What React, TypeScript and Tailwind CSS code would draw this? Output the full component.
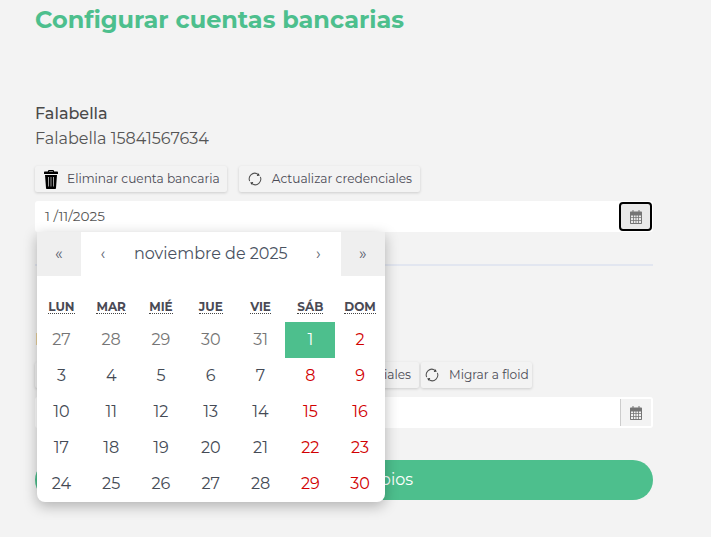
const FONT = "font-['Montserrat','Inter','DejaVu_Sans',sans-serif]"

const days = ['LUN', 'MAR', 'MIÉ', 'JUE', 'VIE', 'SÁB', 'DOM']
const weeks = [
  [27, 28, 29, 30, 31, 1, 2],
  [3, 4, 5, 6, 7, 8, 9],
  [10, 11, 12, 13, 14, 15, 16],
  [17, 18, 19, 20, 21, 22, 23],
  [24, 25, 26, 27, 28, 29, 30],
]

function TrashIcon() {
  return (
    <svg viewBox="0 0 14 19" className="h-[19px] w-[14px] shrink-0" fill="#000">
      <path
        fillRule="evenodd"
        d="M4.500 0h5l.7 1.500H13c.6 0 1 .4 1 1V4H0V2.500c0-.6.4-1 1-1h2.800zM5.200 1l-.3.500h4.200L8.800 1zM1 5h12l-1 13c0 .6-.5 1-1 1H3c-.5 0-1-.4-1-1zM4 7l.4 9.500h.6L4.700 7zm2.700 0v9.500h.6V7zM9.300 7 9 16.500h.6L10 7z"
      />
    </svg>
  )
}

function SyncIcon() {
  return (
    <svg viewBox="0 0 16 16" className="h-[14px] w-[14px] shrink-0" fill="none" stroke="#555" strokeWidth="1.200">
      <path d="M1.900 10.400A6.500 6.500 0 0 1 10.400 1.900" />
      <path d="M14.100 5.600A6.500 6.500 0 0 1 5.600 14.100" />
      <path d="M13.600 4.100 10.100 4.700 11.200 0.900z" fill="#333" stroke="none" />
      <path d="M2.400 11.900 5.900 11.300 4.800 15.100z" fill="#333" stroke="none" />
    </svg>
  )
}

function CalendarIcon() {
  return (
    <svg viewBox="0 0 12 14" className="h-[14px] w-3" fill="#757575">
      <path
        fillRule="evenodd"
        d="M2.500 0h1v1.500h5V0h1v1.500H11c.6 0 1 .4 1 1V13c0 .6-.4 1-1 1H1c-.6 0-1-.4-1-1V2.500c0-.6.4-1 1-1h1.500zM1 5.500v1.800h2.200V5.500zm3 0v1.800h1.600V5.500zm2.400 0v1.800H8V5.500zm2.400 0v1.800H11V5.500zM1 8.100v1.800h2.200V8.100zm3 0v1.800h1.600V8.100zm2.400 0v1.800H8V8.100zm2.400 0v1.800H11V8.100zM1 10.700V13h2.200v-2.300zm3 0V13h1.600v-2.300zm2.400 0V13H8v-2.300zm2.400 0V13H11v-2.300z"
      />
    </svg>
  )
}

function ActionButton({ icon, label, spacing }: { icon: React.ReactNode; label: string; spacing: string }) {
  return (
    <button
      className={`flex h-[26px] items-center rounded-[2px] bg-[#f3f3f3] text-[12.160px] text-[#4a4a55] shadow-[0_1px_3px_rgba(0,0,0,0.16)] ${spacing}`}
    >
      {icon}
      <span>{label}</span>
    </button>
  )
}

function Calendar() {
  return (
    <div className="absolute left-[1.500px] top-[31px] z-10 w-[348.500px] overflow-hidden rounded-b-[8px] bg-white shadow-[0_4px_14px_rgba(0,0,0,0.28)]">
      {/* nav */}
      <div className="flex h-[44px] items-center text-[#5a6270]">
        <span className="flex h-full w-[44.500px] items-center justify-center bg-[#efefef] text-[16px]">«</span>
        <span className="flex h-full w-[44px] items-center justify-center text-[16px]">‹</span>
        <span className="flex-1 text-center text-[16px] text-[#4a5261]">noviembre de 2025</span>
        <span className="flex h-full w-[44px] items-center justify-center text-[16px]">›</span>
        <span className="flex h-full w-[44.500px] items-center justify-center bg-[#efefef] text-[16px]">»</span>
      </div>
      <div className="mt-[18px] grid grid-cols-7 pb-[2px]">
        {days.map((d) => (
          <div key={d} className="flex h-[26px] items-center justify-center">
            <span className="border-b border-dotted border-[#444] text-[12px] font-bold leading-[13px] text-[#4a4a55]">{d}</span>
          </div>
        ))}
      </div>
      <div className="grid grid-cols-7">
        {weeks.map((week, w) =>
          week.map((day, i) => {
            const isSelected = w === 0 && day === 1
            const isOther = w === 0 && i < 5
            const isWeekend = i > 4
            return (
              <div
                key={`${w}-${i}`}
                className={`flex h-[36px] items-center justify-center text-[16px] ${
                  isSelected
                    ? 'bg-[#4dbf8d] text-white'
                    : isOther
                      ? 'text-[#757575]'
                      : isWeekend
                        ? 'text-[#d10000]'
                        : 'text-[#444a55]'
                }`}
              >
                {day}
              </div>
            )
          }),
        )}
      </div>
    </div>
  )
}

export default function App() {
  return (
    <div className={`h-[537px] overflow-hidden bg-[#f3f3f3] pl-[35px] text-[#4a4a4a] ${FONT}`}>
      <div className="w-[618px]">
        <h1 className="mt-[4px] text-[24px] font-bold leading-[32px] text-[#4dbf8d]">Configurar cuentas bancarias</h1>

        {/* first account */}
        <div className="mt-[66px] text-[16px] font-medium leading-[24px]">Falabella</div>
        <div className="mt-[1px] text-[16px] leading-[24px] text-[#555]">Falabella 15841567634</div>
        <div className="mt-[15px] flex gap-[12px]">
          <ActionButton spacing="gap-[9px] pl-[9px] pr-[7px]" icon={<TrashIcon />} label="Eliminar cuenta bancaria" />
          <ActionButton spacing="gap-[10px] pl-[9px] pr-[8px]" icon={<SyncIcon />} label="Actualizar credenciales" />
        </div>

        <div className="relative mt-[9px]">
          <div className="flex h-[31px] items-center rounded-[3px] bg-white pl-[10px] pr-[1px]">
            <span className="flex-1 text-[13.600px] text-[#555]">1 /11/2025</span>
            <button className="flex h-[29px] w-[33px] items-center justify-center rounded-[4px] border-2 border-black bg-[#e9e9e9]">
              <CalendarIcon />
            </button>
          </div>
          <Calendar />
        </div>

        <div className="mt-[32px] h-[2px] bg-[#e2e6f0]" />

        {/* second account, mostly under the popover */}
        <div className="mt-[62px] text-[16px] leading-[24px] text-[#555]">Falabella 15841567634</div>
        <div className="mt-[10px] flex h-[26px] gap-[2px]">
          <div className="flex gap-[11px]">
            <ActionButton spacing="gap-[9px] pl-[9px] pr-[7px]" icon={<TrashIcon />} label="Eliminar cuenta bancaria" />
            <ActionButton spacing="gap-[10px] pl-[9px] pr-[8px]" icon={<SyncIcon />} label="Actualizar credenciales" />
          </div>
          <ActionButton spacing="gap-[10px] pl-[4px] pr-[3px]" icon={<SyncIcon />} label="Migrar a floid" />
        </div>
        <div className="mt-[9px] flex h-[31px] items-center justify-end rounded-[3px] bg-white pr-[2px]">
          <span className="flex h-[27px] w-[31px] items-center justify-center border-l border-[#ccc] bg-[#f3f3f3]">
            <CalendarIcon />
          </span>
        </div>
        <button className="mt-[32px] h-[40px] w-full rounded-full bg-[#4dbf8d] text-[16px] text-white">Guardar cambios</button>
      </div>
    </div>
  )
}
